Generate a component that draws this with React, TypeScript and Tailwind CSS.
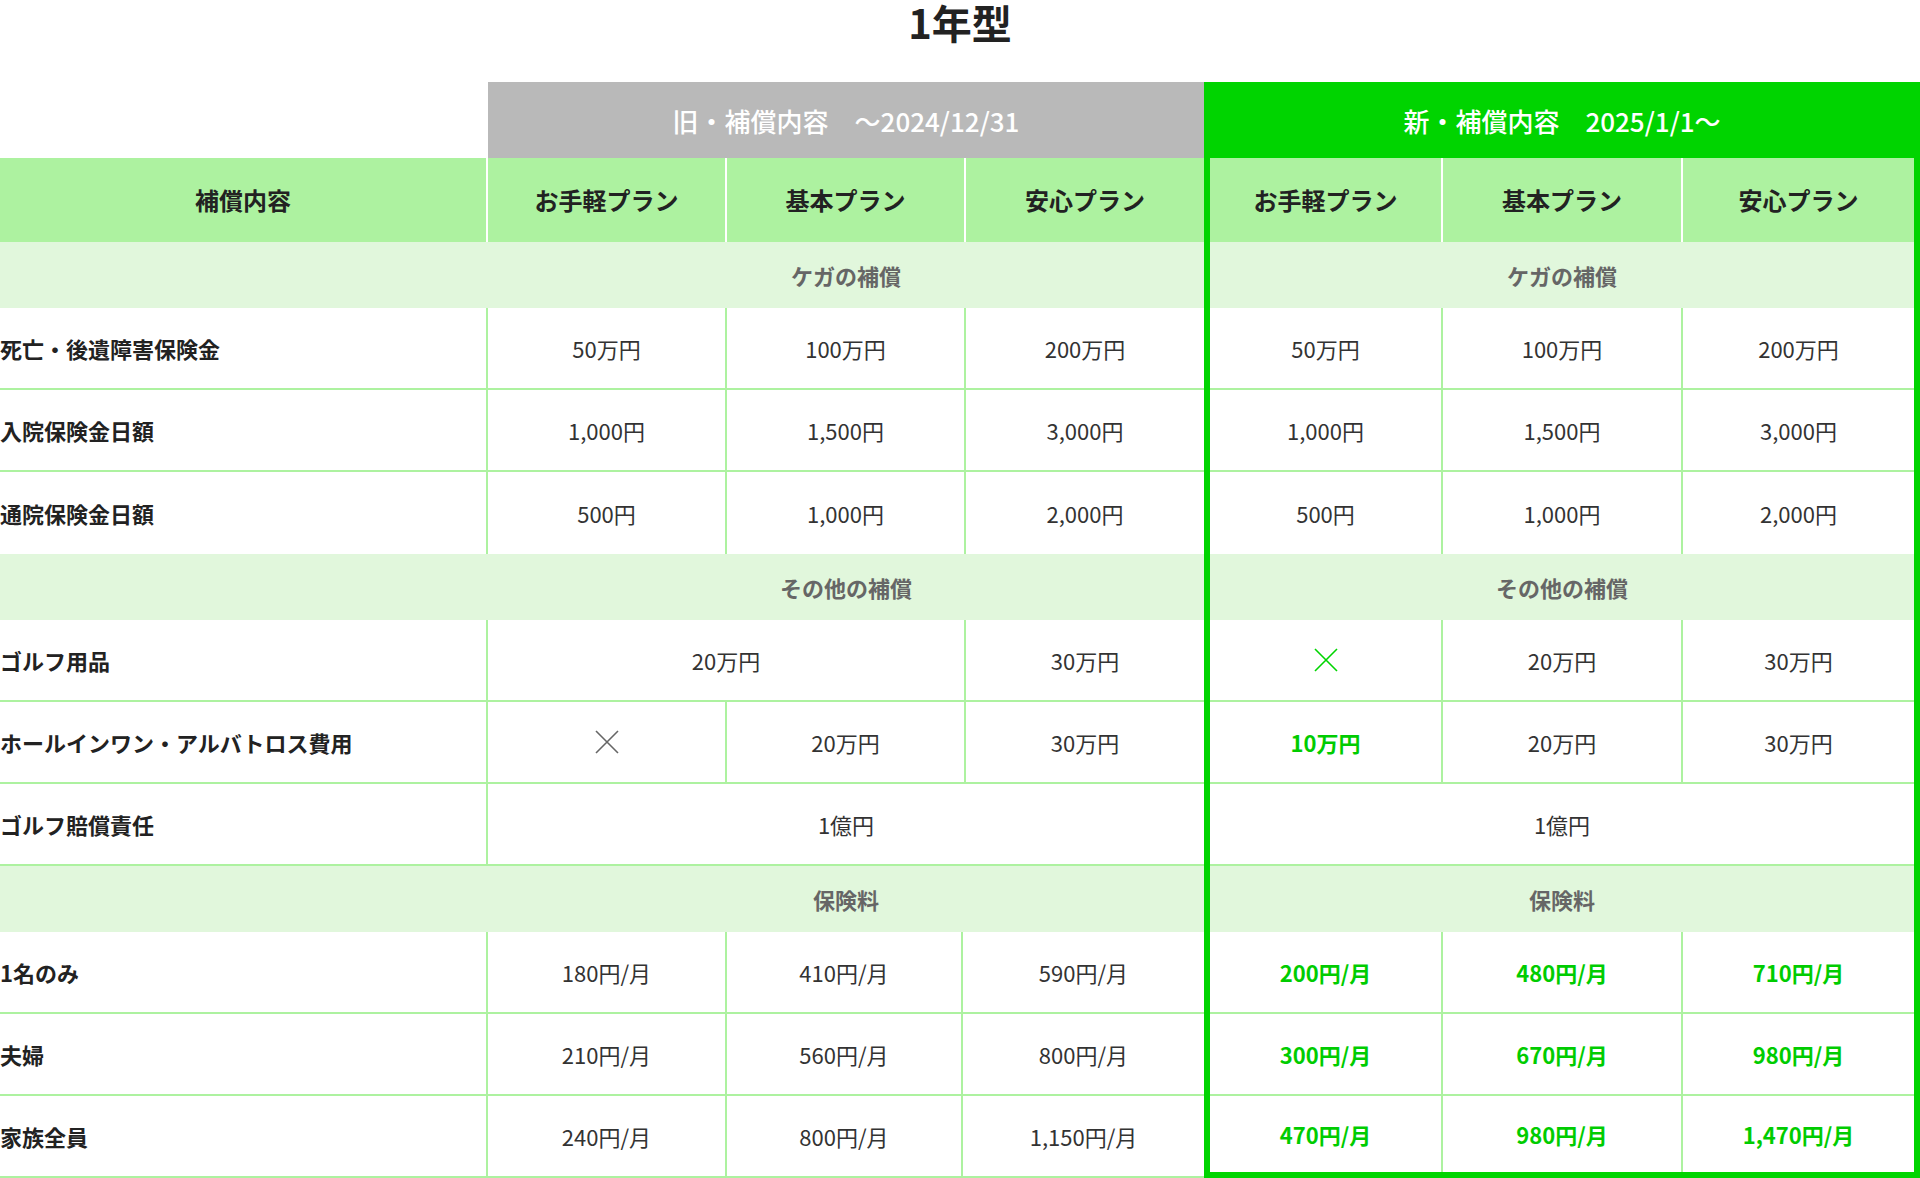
import React from 'react';

type Cell = { v: React.ReactNode; span?: 1 | 2 | 3; green?: boolean };

const Cross = ({ green }: { green?: boolean }) => (
  <svg width="24" height="24" viewBox="0 0 24 24" className={green ? 'text-[#00d400]' : 'text-[#666]'}>
    <path d="M1 1 L23 23 M23 1 L1 23" stroke="currentColor" strokeWidth="1.6" fill="none" />
  </svg>
);

const spanClass = (span?: number) => (span === 3 ? 'col-span-3' : span === 2 ? 'col-span-2' : '');

const DataRow = ({
  label,
  old,
  neu,
  oldGrid = 'grid-cols-[488px_239px_239px_238px]',
  line = true,
  last = false,
}: {
  label: string;
  old: Cell[];
  neu: Cell[];
  oldGrid?: string;
  line?: boolean;
  last?: boolean;
}) => (
  <div className="flex h-[82px]">
    <div className={`grid ${oldGrid} w-[1204px] h-full ${line ? 'border-b-2 border-[#adf2a0]' : ''}`}>
      <div className="flex items-center border-r-2 border-[#adf2a0] text-[22px] font-bold text-[#222]">{label}</div>
      {old.map((c, i) => (
        <div
          key={i}
          className={`flex items-center justify-center text-[22px] ${spanClass(c.span)} ${
            i < old.length - 1 ? 'border-r-2 border-[#adf2a0]' : ''
          } ${c.green ? 'font-bold text-[#00cc00]' : 'text-[#333]'}`}
        >
          {c.v}
        </div>
      ))}
    </div>
    <div className={`w-[716px] h-full border-x-[6px] border-[#00d400] ${last ? 'border-b-[6px]' : ''}`}>
      <div className={`grid grid-cols-[233px_240px_231px] h-full ${!last && line ? 'border-b-2 border-[#adf2a0]' : ''}`}>
        {neu.map((c, i) => (
          <div
            key={i}
            className={`flex items-center justify-center text-[22px] ${spanClass(c.span)} ${
              i < neu.length - 1 ? 'border-r-2 border-[#adf2a0]' : ''
            } ${c.green ? 'font-bold text-[#00cc00]' : 'text-[#333]'}`}
          >
            {c.v}
          </div>
        ))}
      </div>
    </div>
  </div>
);

const SectionRow = ({ title }: { title: string }) => (
  <div className="flex h-[66px] bg-[#e1f7dc] text-[22px] font-bold text-[#666]">
    <div className="grid grid-cols-[488px_716px] w-[1204px]">
      <div />
      <div className="flex items-center justify-center">{title}</div>
    </div>
    <div className="flex w-[716px] items-center justify-center border-x-[6px] border-[#00d400]">{title}</div>
  </div>
);

const plans = ['お手軽プラン', '基本プラン', '安心プラン'];

export default function App() {
  return (
    <div className="w-[1920px] bg-white font-['Noto_Sans_CJK_JP','Noto_Sans',sans-serif]">
      <div className="h-[82px] pt-[2px]">
        <h1 className="text-center text-[40px] leading-[40px] font-bold text-[#222]">1年型</h1>
      </div>

      {/* period headers */}
      <div className="flex h-[76px] text-[26px] font-medium text-white">
        <div className="w-[488px]" />
        <div className="flex w-[716px] items-center justify-center bg-[#b9b9b9]">旧・補償内容　～2024/12/31</div>
        <div className="flex w-[716px] items-center justify-center bg-[#00d400]">新・補償内容　2025/1/1～</div>
      </div>

      {/* plan headers */}
      <div className="flex h-[84px] text-[24px] font-bold text-[#222]">
        <div className="grid grid-cols-[488px_239px_239px_238px] w-[1204px] bg-[#adf2a0]">
          <div className="flex items-center justify-center border-r-2 border-white">補償内容</div>
          {plans.map((p, i) => (
            <div key={p} className={`flex items-center justify-center ${i < 2 ? 'border-r-2 border-white' : ''}`}>
              {p}
            </div>
          ))}
        </div>
        <div className="w-[716px] border-x-[6px] border-[#00d400]">
          <div className="grid grid-cols-[233px_240px_231px] h-full bg-[#adf2a0]">
            {plans.map((p, i) => (
              <div key={p} className={`flex items-center justify-center ${i < 2 ? 'border-r-2 border-white' : ''}`}>
                {p}
              </div>
            ))}
          </div>
        </div>
      </div>

      <SectionRow title="ケガの補償" />
      <DataRow
        label="死亡・後遺障害保険金"
        old={[{ v: '50万円' }, { v: '100万円' }, { v: '200万円' }]}
        neu={[{ v: '50万円' }, { v: '100万円' }, { v: '200万円' }]}
      />
      <DataRow
        label="入院保険金日額"
        old={[{ v: '1,000円' }, { v: '1,500円' }, { v: '3,000円' }]}
        neu={[{ v: '1,000円' }, { v: '1,500円' }, { v: '3,000円' }]}
      />
      <DataRow
        label="通院保険金日額"
        old={[{ v: '500円' }, { v: '1,000円' }, { v: '2,000円' }]}
        neu={[{ v: '500円' }, { v: '1,000円' }, { v: '2,000円' }]}
        line={false}
      />

      <SectionRow title="その他の補償" />
      <DataRow
        label="ゴルフ用品"
        old={[{ v: '20万円', span: 2 }, { v: '30万円' }]}
        neu={[{ v: <Cross green /> }, { v: '20万円' }, { v: '30万円' }]}
      />
      <DataRow
        label="ホールインワン・アルバトロス費用"
        old={[{ v: <Cross /> }, { v: '20万円' }, { v: '30万円' }]}
        neu={[{ v: '10万円', green: true }, { v: '20万円' }, { v: '30万円' }]}
      />
      <DataRow label="ゴルフ賠償責任" old={[{ v: '1億円', span: 3 }]} neu={[{ v: '1億円', span: 3 }]} />

      <SectionRow title="保険料" />
      <DataRow
        label="1名のみ"
        oldGrid="grid-cols-[488px_239px_236px_241px]"
        old={[{ v: '180円/月' }, { v: '410円/月' }, { v: '590円/月' }]}
        neu={[
          { v: '200円/月', green: true },
          { v: '480円/月', green: true },
          { v: '710円/月', green: true },
        ]}
      />
      <DataRow
        label="夫婦"
        oldGrid="grid-cols-[488px_239px_236px_241px]"
        old={[{ v: '210円/月' }, { v: '560円/月' }, { v: '800円/月' }]}
        neu={[
          { v: '300円/月', green: true },
          { v: '670円/月', green: true },
          { v: '980円/月', green: true },
        ]}
      />
      <DataRow
        label="家族全員"
        oldGrid="grid-cols-[488px_239px_236px_241px]"
        old={[{ v: '240円/月' }, { v: '800円/月' }, { v: '1,150円/月' }]}
        neu={[
          { v: '470円/月', green: true },
          { v: '980円/月', green: true },
          { v: '1,470円/月', green: true },
        ]}
        last
      />
    </div>
  );
}
